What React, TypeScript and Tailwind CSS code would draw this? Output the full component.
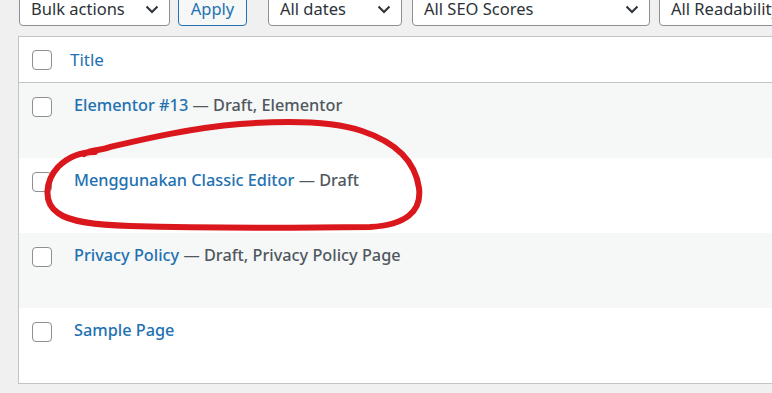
import React from "react";

const rows = [
  { title: "Elementor #13", state: "Draft, Elementor" },
  { title: "Menggunakan Classic Editor", state: "Draft" },
  { title: "Privacy Policy", state: "Draft, Privacy Policy Page" },
  { title: "Sample Page", state: "" },
];

function Chevron() {
  return (
    <svg width="14" height="9" viewBox="0 0 14 9" className="shrink-0">
      <path d="M1.5 1.5 L7 7 L12.5 1.5" fill="none" stroke="#2c3338" strokeWidth="2" />
    </svg>
  );
}

function Select({ label, width }: { label: string; width: string }) {
  return (
    <div
      className={`${width} h-[34px] shrink-0 flex items-center justify-between rounded-[4px] border border-[#8c8f94] bg-white pl-[11px] pr-[10px] text-[16.5px] text-[#2c3338] overflow-hidden whitespace-nowrap`}
    >
      <span>{label}</span>
      <Chevron />
    </div>
  );
}

function Checkbox() {
  return <div className="h-[20px] w-[20px] shrink-0 rounded-[4px] border border-[#8c8f94] bg-white" />;
}

export default function App() {
  return (
    <div
      className="relative h-[393px] w-[772px] overflow-hidden bg-[#f0f0f1]"
      style={{ fontFamily: '"Noto Sans", "Open Sans", sans-serif' }}
    >
      <div className="-mt-[8px] flex items-center pl-[19px]">
        <Select label="Bulk actions" width="w-[151px]" />
        <div className="ml-[8px] flex h-[34px] w-[69px] shrink-0 items-center justify-center rounded-[4px] border border-[#2271b1] bg-[#f6f7f7] text-[16.5px] text-[#2271b1]">
          Apply
        </div>
        <div className="ml-[21px]">
          <Select label="All dates" width="w-[134px]" />
        </div>
        <div className="ml-[10px]">
          <Select label="All SEO Scores" width="w-[238px]" />
        </div>
        <div className="ml-[9px]">
          <div className="flex h-[34px] w-[140px] shrink-0 items-center rounded-[4px] border border-[#8c8f94] bg-white pl-[11px] text-[16.5px] text-[#2c3338] whitespace-nowrap overflow-hidden">
            All Readability Scores
          </div>
        </div>
      </div>

      <div className="ml-[18px] mt-[10px] border-y border-l border-[#c3c4c7] bg-white">
        <div className="flex h-[46px] items-center border-b border-[#c3c4c7] pl-[13px]">
          <Checkbox />
          <span className="ml-[18px] text-[17px] text-[#2271b1]">Title</span>
        </div>
        {rows.map((row, i) => (
          <div
            key={row.title}
            className={`flex h-[75px] items-start pl-[13px] pt-[14px] ${i % 2 === 0 ? "bg-[#f6f7f7]" : "bg-white"}`}
          >
            <Checkbox />
            <div className="ml-[22px] -mt-[4px] whitespace-nowrap text-[16.3px] font-medium">
              <span className="text-[#2271b1]">{row.title}</span>
              {row.state && <span className="text-[#50575e]"> — {row.state}</span>}
            </div>
          </div>
        ))}
      </div>

      <svg className="pointer-events-none absolute left-0 top-0" width="772" height="393" viewBox="0 0 772 393">
        <path
          d="M 84 154 C 92 149, 100 151, 110 147 C 140 140, 190 128, 240 124 C 280 121, 330 120, 362 131 C 395 142, 415 160, 419 188 C 422 212, 405 225, 370 227 C 300 228, 200 228, 130 226 C 95 225, 70 222, 58 213 C 42 202, 46 180, 58 167 C 68 157, 80 152, 95 152"
          fill="none"
          stroke="#d9171c"
          strokeWidth="6"
          strokeLinecap="round"
          strokeLinejoin="round"
        />
      </svg>
    </div>
  );
}
